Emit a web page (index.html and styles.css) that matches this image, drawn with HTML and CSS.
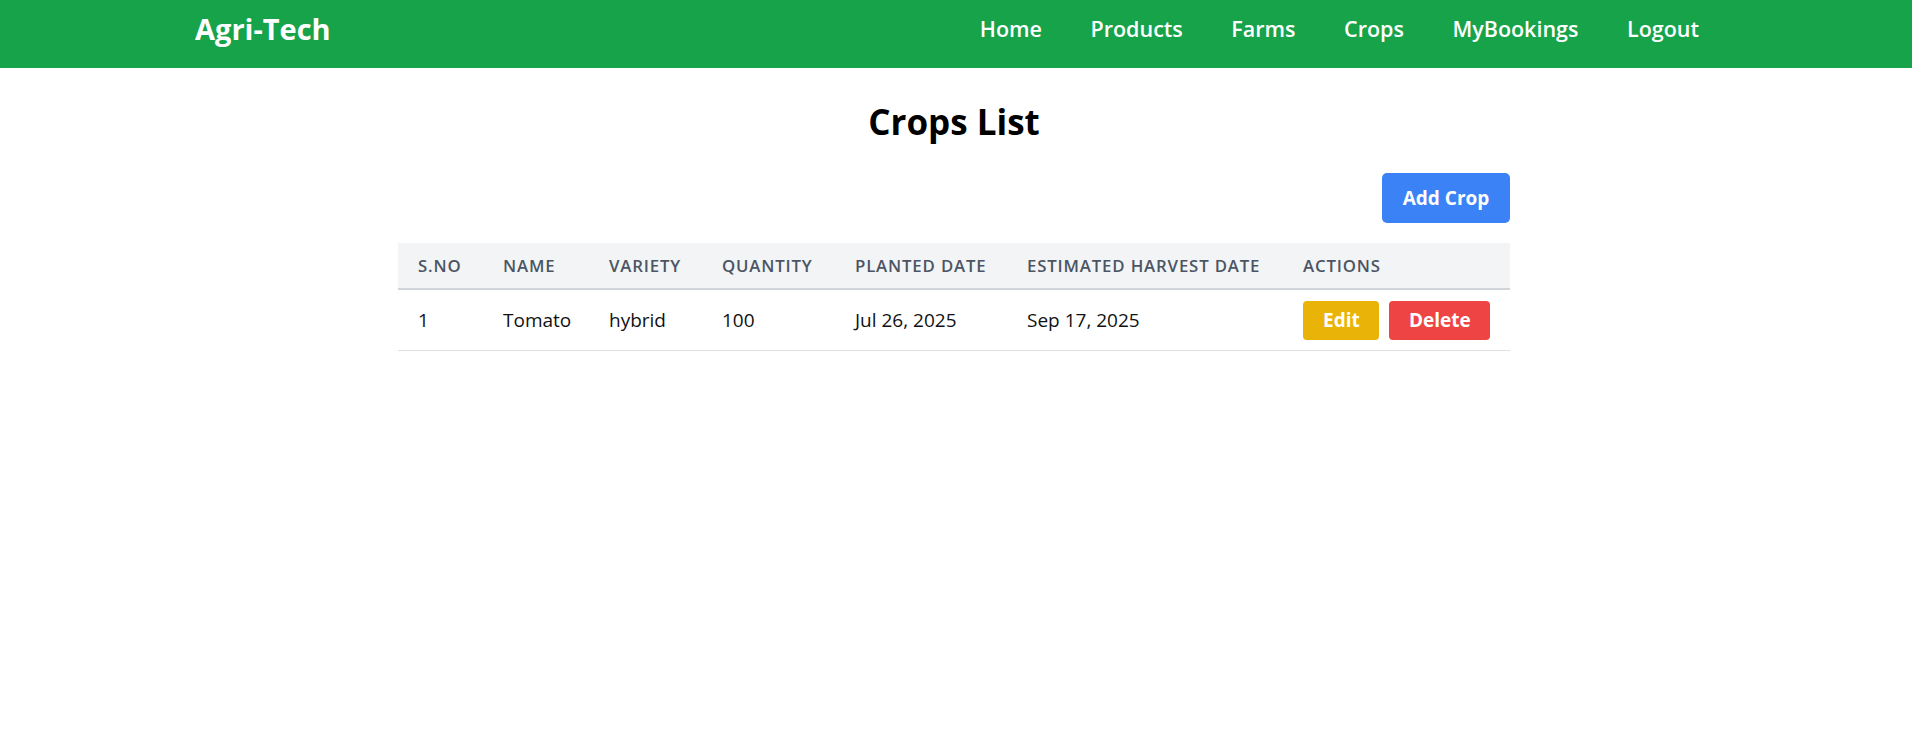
FILE: index.html
```html
<!DOCTYPE html>
<html lang="en">
<head>
<meta charset="utf-8">
<title>Agri-Tech - Crops</title>
<link rel="stylesheet" href="styles.css">
</head>
<body>
<header class="navbar">
  <div class="nav-inner">
    <a class="logo" href="#">Agri-Tech</a>
    <nav class="nav-links">
      <a href="#">Home</a>
      <a href="#">Products</a>
      <a href="#">Farms</a>
      <a href="#">Crops</a>
      <a href="#">MyBookings</a>
      <a href="#">Logout</a>
    </nav>
  </div>
</header>
<main class="page">
  <h1 class="title">Crops List</h1>
  <div class="toolbar">
    <button class="btn btn-blue">Add Crop</button>
  </div>
  <table class="crops">
    <thead>
      <tr>
        <th class="c-sno">S.No</th>
        <th class="c-name">Name</th>
        <th class="c-variety">Variety</th>
        <th class="c-qty">Quantity</th>
        <th class="c-planted">Planted Date</th>
        <th class="c-harvest">Estimated Harvest Date</th>
        <th class="c-actions">Actions</th>
      </tr>
    </thead>
    <tbody>
      <tr>
        <td>1</td>
        <td>Tomato</td>
        <td>hybrid</td>
        <td>100</td>
        <td>Jul 26, 2025</td>
        <td>Sep 17, 2025</td>
        <td>
          <div class="actions">
            <button class="btn btn-small btn-yellow">Edit</button>
            <button class="btn btn-small btn-red">Delete</button>
          </div>
        </td>
      </tr>
    </tbody>
  </table>
</main>
</body>
</html>
```

FILE: styles.css
```css
* {
  box-sizing: border-box;
}

html, body {
  margin: 0;
  padding: 0;
  background: #ffffff;
}

body {
  font-family: "Open Sans", "Noto Sans", sans-serif;
  color: #111111;
}

.navbar {
  background: #16a34a;
  height: 68px;
}

.nav-inner {
  max-width: 1536px;
  margin: 0 auto;
  height: 58px;
  padding: 0 25px 0 7px;
  display: flex;
  align-items: center;
  justify-content: space-between;
}

.logo {
  color: #ffffff;
  text-decoration: none;
  font-weight: 700;
  font-size: 29px;
  line-height: 36px;
}

.nav-links {
  display: flex;
  gap: 48.5px;
}

.nav-links a {
  color: #ffffff;
  text-decoration: none;
  font-weight: 600;
  font-size: 21.5px;
  line-height: 28px;
}

.page {
  width: 1112px;
  margin-left: calc(50% - 558px);
}

.title {
  margin: 34px 0 0;
  text-align: center;
  font-size: 35px;
  line-height: 40px;
  font-weight: 700;
  color: #000000;
}

.toolbar {
  display: flex;
  justify-content: flex-end;
  margin-top: 31px;
  margin-bottom: 20px;
}

.btn {
  border: none;
  color: #ffffff;
  font-family: "Open Sans", "Noto Sans", sans-serif;
  font-weight: 700;
  font-size: 19px;
  cursor: pointer;
}

.btn-blue {
  background: #3b82f6;
  width: 128px;
  height: 50px;
  border-radius: 5px;
  line-height: 26px;
  padding: 0;
}

.btn-small {
  height: 39px;
  line-height: 25px;
  padding: 0 20px;
  border-radius: 4px;
}

.btn-yellow {
  background: #eab308;
  width: 76px;
}

.btn-red {
  background: #ef4444;
  width: 101px;
}

.actions {
  display: flex;
  gap: 10px;
}

.crops {
  width: 1112px;
  border-collapse: collapse;
  table-layout: fixed;
}

.crops thead tr {
  background: #f3f4f6;
}

.crops th {
  text-align: left;
  text-transform: uppercase;
  font-weight: 600;
  font-size: 16.8px;
  letter-spacing: 0.05em;
  color: #4b5563;
  line-height: 24px;
  padding: 11px 0 10px 20px;
  border-bottom: 2px solid #d1d5db;
}

.c-sno { width: 85px; }
.c-name { width: 106px; }
.c-variety { width: 113px; }
.c-qty { width: 133px; }
.c-planted { width: 172px; }
.c-harvest { width: 276px; }
.c-actions { width: 227px; }

.crops td {
  height: 61px;
  padding: 1px 0 0 20px;
  font-size: 19px;
  line-height: 26px;
  color: #111111;
  vertical-align: middle;
  border-bottom: 1px solid #dcdfe4;
}
```
